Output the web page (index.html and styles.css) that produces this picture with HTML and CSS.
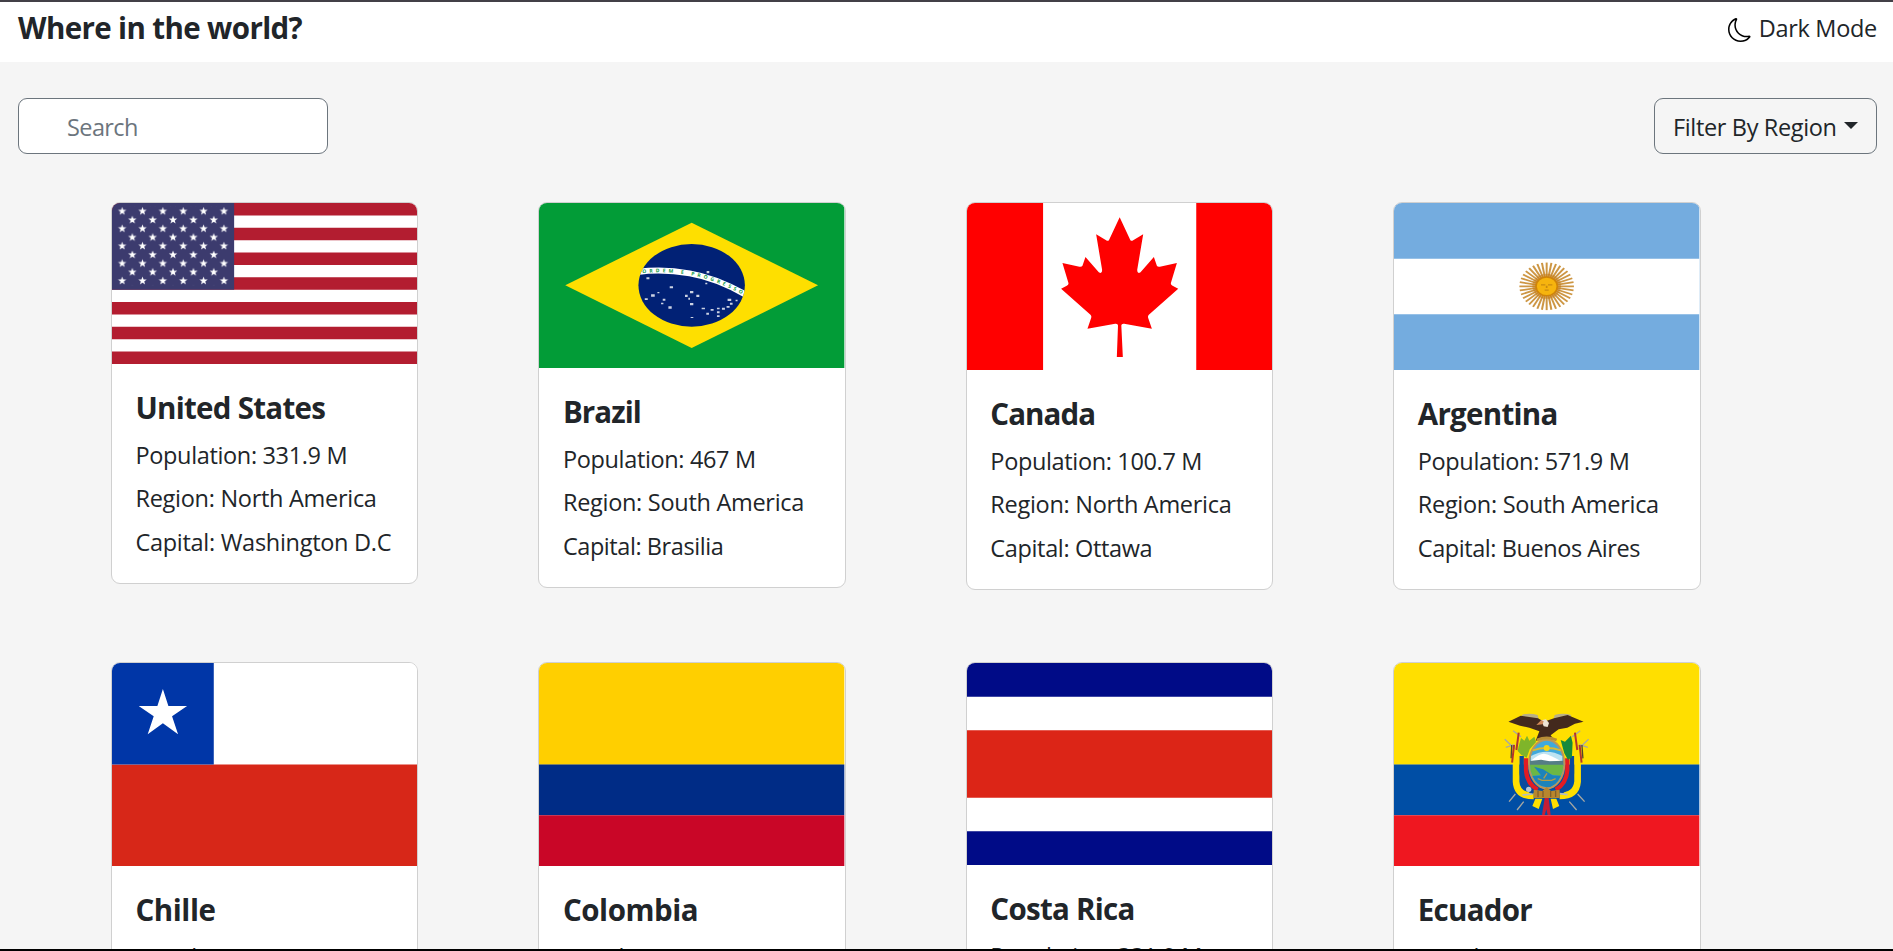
FILE: index.html
```html
<!DOCTYPE html>
<html lang="en">
<head>
<meta charset="utf-8">
<title>Where in the world?</title>
<link rel="stylesheet" href="styles.css">
</head>
<body>
<div class="page">
  <header class="navbar">
    <h1 class="brand">Where in the world?</h1>
    <div class="mode">
      <svg class="moon" viewBox="0 0 16 16"><path d="M6 .278a.77.77 0 0 1 .08.858 7.2 7.2 0 0 0-.878 3.46c0 4.021 3.278 7.277 7.318 7.277q.792-.001 1.533-.16a.79.79 0 0 1 .81.316.73.73 0 0 1-.031.893A8.35 8.35 0 0 1 8.344 16C3.734 16 0 12.286 0 7.71 0 4.266 2.114 1.312 5.124.06A.75.75 0 0 1 6 .278M4.858 1.311A7.27 7.27 0 0 0 1.025 7.71c0 4.02 3.279 7.276 7.319 7.276a7.32 7.32 0 0 0 5.205-2.162q-.506.063-1.029.063c-4.61 0-8.343-3.714-8.343-8.29 0-1.167.242-2.278.681-3.286"/></svg>
      <span class="mode-label">Dark Mode</span>
    </div>
  </header>
  <div class="toolbar">
    <input class="search" type="text" placeholder="Search">
    <button class="filter" type="button"><span class="filter-label">Filter By Region</span><span class="caret"></span></button>
  </div>
  <main class="grid">
    <article class="card">
      <svg class="flag" style="height:161px" viewBox="36 39 915 483" preserveAspectRatio="none">
        <defs>
          <path id="star" d="M0-13 3.2-4.2 12.4-4 5.1 1.7 7.6 10.5 0 5.4-7.6 10.5-5.1 1.7-12.4-4-3.2-4.2Z" fill="#fff"/>
          <pattern id="stars" x="36" y="38" width="61" height="52.2" patternUnits="userSpaceOnUse">
            <use href="#star" x="30.5" y="26.1"/><use href="#star"/><use href="#star" x="61"/><use href="#star" y="52.2"/><use href="#star" x="61" y="52.2"/>
          </pattern>
        </defs>
        <path fill="#fff" d="M36 39h915v483H36z"/>
        <path stroke="#b31d30" stroke-width="37.15" d="M36 57.6h915M36 131.9h915M36 206.2h915M36 280.5h915M36 354.8h915M36 429.1h915M36 503.4h915"/>
        <path fill="#3c3b6e" d="M36 39h366v260H36z"/>
        <path fill="url(#stars)" d="M51 50h336v236H51z"/>
      </svg>
      <div class="card-body">
        <h2 class="card-title">United States</h2>
        <p>Population: 331.9 M</p><p class="wide">Region: North America</p><p class="wide">Capital: Washington D.C</p>
      </div>
    </article>
    <article class="card">
      <svg class="flag" style="height:165px" viewBox="27 39 918 495" preserveAspectRatio="none">
        <defs><clipPath id="globe"><ellipse cx="486" cy="286" rx="160" ry="124"/></clipPath></defs>
        <path fill="#029c37" d="M27 39h918v495H27z"/>
        <path fill="#fedf00" d="M106 286 486 98 866 286 486 474z"/>
        <ellipse cx="486" cy="286" rx="160" ry="124" fill="#012175"/>
        <g clip-path="url(#globe)">
          <path d="M322 246Q398 236 480 250T652 316" fill="none" stroke="#fff" stroke-width="18"/>
          <path id="motto" d="M338 250Q402 242 480 255T650 320" fill="none"/>
          <text class="motto"><textPath href="#motto" textLength="310">ORDEM E PROGRESSO</textPath></text>
        </g>
        <path fill="#fff" opacity=".8" d="M531 243h8v7h-8zM527 278h6v5h-6zM350 262h9v6h-9zM420 289h10v6h-10zM364 313h11v7h-11zM345 325h9v5h-9zM383 306h6v4h-6zM399 326h8v6h-8zM394 338h7v5h-7zM416 349h10v7h-10zM481 303h10v7h-10zM466 314h8v7h-8zM500 314h9v7h-9zM476 323h5v6h-5zM481 339h10v7h-10zM483 381h8v3h-8zM516 353h10v5h-10zM543 357h9v5h-9zM530 368h8v6h-8zM562 353h8v5h-8zM562 364h8v6h-8zM562 376h8v5h-8zM577 353h9v6h-9zM591 348h9v5h-9zM601 338h8v6h-8zM594 326h11v7h-11zM618 329h6v5h-6z"/>
      </svg>
      <div class="card-body">
        <h2 class="card-title tight">Brazil</h2>
        <p>Population: 467 M</p><p class="wide">Region: South America</p><p class="tight">Capital: Brasilia</p>
      </div>
    </article>
    <article class="card">
      <svg class="flag" style="height:167px" viewBox="51 39 915 501" preserveAspectRatio="none">
        <path fill="#fff" d="M51 39h915v501H51z"/>
        <path fill="#f00" d="M51 39h228v501H51zM738 39h228v501H738z"/>
        <path fill="#f00" d="M508.500 82L540 149Q543 155 549 151L579 133L561 240Q561 253 571 247L611 201L620 227Q622 231 629 230L680 219L662 279Q661 284 667 287L684 296L596 374Q592 378 594 384L605 416L522 401Q513 400 513.500 407L518 501H500L503.500 407Q504 400 495 401L412 416L423 384Q425 378 421 374L333 296L350 287Q356 284 355 279L337 219L388 230Q395 231 397 227L406 201L446 247Q456 253 456 240L438 133L468 151Q474 155 477 149Z"/>
      </svg>
      <div class="card-body">
        <h2 class="card-title tight">Canada</h2>
        <p>Population: 100.7 M</p><p class="wide">Region: North America</p><p>Capital: Ottawa</p>
      </div>
    </article>
    <article class="card">
      <svg class="flag" style="height:167px" viewBox="42 39 918 501" preserveAspectRatio="none">
        <path fill="#74acdf" d="M42 39h918v501H42z"/>
        <path fill="#fff" d="M42 206h918v167H42z"/>
        <defs>
          <path id="ray" d="M-82 0H82" stroke="#cd9643" stroke-width="6"/>
          <g id="rays"><use href="#ray"/><use href="#ray" transform="rotate(10)"/><use href="#ray" transform="rotate(20)"/></g>
        </defs>
        <g transform="translate(501 289) scale(1 .87)">
          <use href="#rays"/><use href="#rays" transform="rotate(30)"/><use href="#rays" transform="rotate(60)"/><use href="#rays" transform="rotate(90)"/><use href="#rays" transform="rotate(120)"/><use href="#rays" transform="rotate(150)"/>
          <circle r="43" fill="#c47a14" opacity=".5"/>
          <circle r="32" fill="#f6b40e" stroke="#cf8409" stroke-width="5"/>
          <path d="M-17-5h13M4-5h13M-6 13H6M0-2v8" stroke="#c98a10" stroke-width="5"/>
        </g>
      </svg>
      <div class="card-body">
        <h2 class="card-title">Argentina</h2>
        <p>Population: 571.9 M</p><p class="wide">Region: South America</p><p class="tight">Capital: Buenos Aires</p>
      </div>
    </article>
    <article class="card">
      <svg class="flag" style="height:203px" viewBox="36 39 915 609" preserveAspectRatio="none">
        <path fill="#fff" d="M36 39h915v305H36z"/>
        <path fill="#d72718" d="M36 343.500h915V648H36z"/>
        <path fill="#0036a7" d="M36 39h305v304.500H36z"/>
        <path fill="#fff" d="M188.500 117 205 168H261L216 199 234 253 188.500 220 143 253 161 199 116 168H172Z"/>
      </svg>
      <div class="card-body">
        <h2 class="card-title wide">Chille</h2>
        <p>Population: 19.5 M</p><p>Region: South America</p><p>Capital: Santiago</p>
      </div>
    </article>
    <article class="card">
      <svg class="flag" style="height:203px" viewBox="27 39 918 609" preserveAspectRatio="none">
        <path fill="#ffcf00" d="M27 39h918v305H27z"/>
        <path fill="#002c86" d="M27 343.500h918V496H27z"/>
        <path fill="#c90627" d="M27 495.500h918V648H27z"/>
      </svg>
      <div class="card-body">
        <h2 class="card-title wide">Colombia</h2>
        <p>Population: 51.5 M</p><p>Region: South America</p><p>Capital: Bogota</p>
      </div>
    </article>
    <article class="card">
      <svg class="flag" style="height:202px" viewBox="51 39 915 606" preserveAspectRatio="none">
        <path fill="#fff" d="M51 39h915v606H51z"/>
        <path fill="#000b87" d="M51 39h915v101H51zM51 544h915v101H51z"/>
        <path fill="#dc2517" d="M51 241h915v202H51z"/>
      </svg>
      <div class="card-body">
        <h2 class="card-title">Costa Rica</h2>
        <p>Population: 331.9 M</p><p>Region: North America</p><p>Capital: San Jose</p>
      </div>
    </article>
    <article class="card">
      <svg class="flag" style="height:203px" viewBox="42 39 918 609" preserveAspectRatio="none">
        <path fill="#ffdf00" d="M42 39h918v305H42z"/>
        <path fill="#004ea5" d="M42 343.500h918V496H42z"/>
        <path fill="#ef1720" d="M42 495.500h918V648H42z"/>
        <g fill="none">
          <path d="M407 432 388 455M432 455 412 480M594 432 615 455M569 455 591 480M375 268l30 28M378 292l26-8M400 242l24 18M627 268l-30 28M625 292l-26-8M602 242l-24 18" stroke="#a7a8a2" stroke-width="4"/>
          <path d="M409 335V395Q412 438 462 438" stroke="#ffdf00" stroke-width="20"/>
          <path d="M594 335V395Q590 438 540 438" stroke="#ffdf00" stroke-width="20"/>
          <path d="M426 318V370Q430 415 462 427M577 318V370Q572 415 540 427" stroke="#0a4a9c" stroke-width="13"/>
          <path d="M439 325V362Q442 402 474 419M563 325V362Q560 402 528 419" stroke="#e31b23" stroke-width="13"/>
          <path d="M403 285 397 338M417 248 410 300M600 285 606 338M586 248 593 300" stroke="#b3362c" stroke-width="6"/>
          <path d="M396 285 394 325M607 285 610 325" stroke="#51462f" stroke-width="4"/>
        </g>
        <path fill="#7fb52a" d="M417 288 424 264 434 272 442 257 449 272 464 260 469 276 450 298 441 323 425 315 414 303z"/>
        <path fill="#178a3c" d="M543 270 556 275 574 257 579 278 577 322 565 329 554 310z"/>
        <ellipse cx="501" cy="342" rx="56" ry="76" fill="#b9955c"/>
        <ellipse cx="501" cy="342" rx="50" ry="70" fill="#40a9dc"/>
        <path fill="#bde3f2" d="M454 318Q501 292 548 318V340H454z"/>
        <path fill="#fff" d="M454 332Q480 310 493 311 512 314 545 334z"/>
        <path fill="#557d85" d="M451 333 484 329 510 334 551 332V347H451z"/>
        <path fill="#6cb744" d="M451 344H551Q551 364 543 379L501 371 459 379Q451 364 451 344z"/>
        <path fill="#1c83ba" d="M463 350 490 358 519 376 544 377Q529 411 501 412 473 411 458 378L484 376z"/>
        <path d="M474 386 487 391H516L528 386M492 385l10-15" fill="none" stroke="#b79b43" stroke-width="4"/>
        <path d="M459 301Q501 287 544 301" fill="none" stroke="#d5b938" stroke-width="6"/>
        <circle cx="501" cy="294" r="9" fill="#f5d313"/>
        <path fill="#b8862e" d="M462 419 488 423 501 411 514 423 540 419V444H462z"/>
        <path d="M475 423v18M490 423v18M513 423v18M528 423v18" stroke="#83602a" stroke-width="4"/>
        <path fill="#ffdf00" d="M467 446H488L477 477 458 468zM513 446H530L539 468 520 477z"/>
        <path fill="#c61e35" d="M495 444H507L513 495H504L500 478 495 495H487z"/>
        <path fill="#b9ae86" d="M426 195Q446 187 474 195L477 208 430 202zM525 195Q550 187 575 195L571 202 521 210z"/>
        <path fill="#43291d" d="M386 215 423 197 475 205 493 215 523 205 564 195 612 215 586 221 563 233 537 238 513 256 524 270 501 264 468 272 479 244 449 233 421 227z"/>
        <path fill="#eee3d5" d="M485 211 499 208 508 219 504 231 492 229z"/>
        <path fill="#d28b5b" d="M470 225 485 210 492 214 489 223z"/>
        <path d="M472 270Q501 257 531 270" fill="none" stroke="#b88d36" stroke-width="8"/>
        <circle cx="447" cy="418" r="8" fill="#b9c9d7"/>
        <path d="M428 435 459 432M541 431 564 434" stroke="#b0bdc5" stroke-width="5"/>
      </svg>
      <div class="card-body">
        <h2 class="card-title">Ecuador</h2>
        <p>Population: 17.8 M</p><p>Region: South America</p><p>Capital: Quito</p>
      </div>
    </article>
  </main>
</div>
</body>
</html>
```
FILE: styles.css
```css
* { box-sizing: border-box; }

body {
  margin: 0;
  font-family: "Open Sans", "Noto Sans", sans-serif;
  font-size: 23.5px;
  line-height: 36px;
  letter-spacing: -0.35px;
  color: #212529;
}

.page {
  height: 951px;
  overflow: hidden;
  background: #f5f5f5;
  border-top: 2px solid #434047;
  border-bottom: 2px solid #000;
}

.navbar {
  display: flex;
  justify-content: space-between;
  align-items: flex-start;
  height: 60px;
  padding: 8px 16px 0 18px;
  background: #fff;
}

.brand {
  margin: 0;
  font-size: 29.5px;
  line-height: 36px;
  font-weight: 700;
  letter-spacing: -0.62px;
}

.mode { display: flex; gap: 7px; letter-spacing: -0.3px; }

.moon {
  width: 24px;
  height: 24px;
  margin-top: 8px;
  fill: #000;
}

.toolbar {
  display: flex;
  justify-content: space-between;
  padding: 36px 16px 0 18px;
}

.search,
.filter {
  height: 56px;
  border: 1px solid #6c757d;
  border-radius: 9px;
  font: inherit;
  letter-spacing: inherit;
  color: inherit;
}

.search {
  width: 310px;
  padding: 1px 18px 0 48px;
  background: #fff;
  letter-spacing: -0.6px;
}

.search::placeholder { color: #6c757d; opacity: 1; }

.filter {
  display: flex;
  align-items: center;
  justify-content: space-between;
  width: 223px;
  padding: 1px 18px 0;
  background: transparent;
  white-space: nowrap;
}

.caret {
  margin-top: -2px;
  border-top: 7px solid #212529;
  border-left: 7px solid transparent;
  border-right: 7px solid transparent;
}

.grid {
  display: grid;
  grid-template-columns: repeat(4, 307.33px);
  column-gap: 120.1px;
  row-gap: 72px;
  align-items: start;
  padding: 48px 0 0 111px;
}

.card {
  overflow: hidden;
  background: #fff;
  border: 1px solid #d0d0d0;
  border-radius: 9px;
}

.flag { display: block; width: 100%; }

.motto {
  font-size: 15px;
  font-weight: 700;
  fill: #0b9a43;
}

.card-body {
  display: flex;
  flex-direction: column;
  gap: 7.5px;
  padding: 25.5px 23.5px;
  padding-bottom: 23.5px;
  white-space: nowrap;
}

.card-title {
  margin: 0 0 3.5px;
  font-size: 29.5px;
  line-height: 36px;
  font-weight: 700;
  letter-spacing: -0.72px;
}

.card-title.tight { letter-spacing: -0.92px; }
.card-title.wide { letter-spacing: -0.45px; }

.card-body p { margin: 0; }
.card-body p.tight { letter-spacing: -0.43px; }
.card-body p.wide { letter-spacing: -0.29px; }
```
